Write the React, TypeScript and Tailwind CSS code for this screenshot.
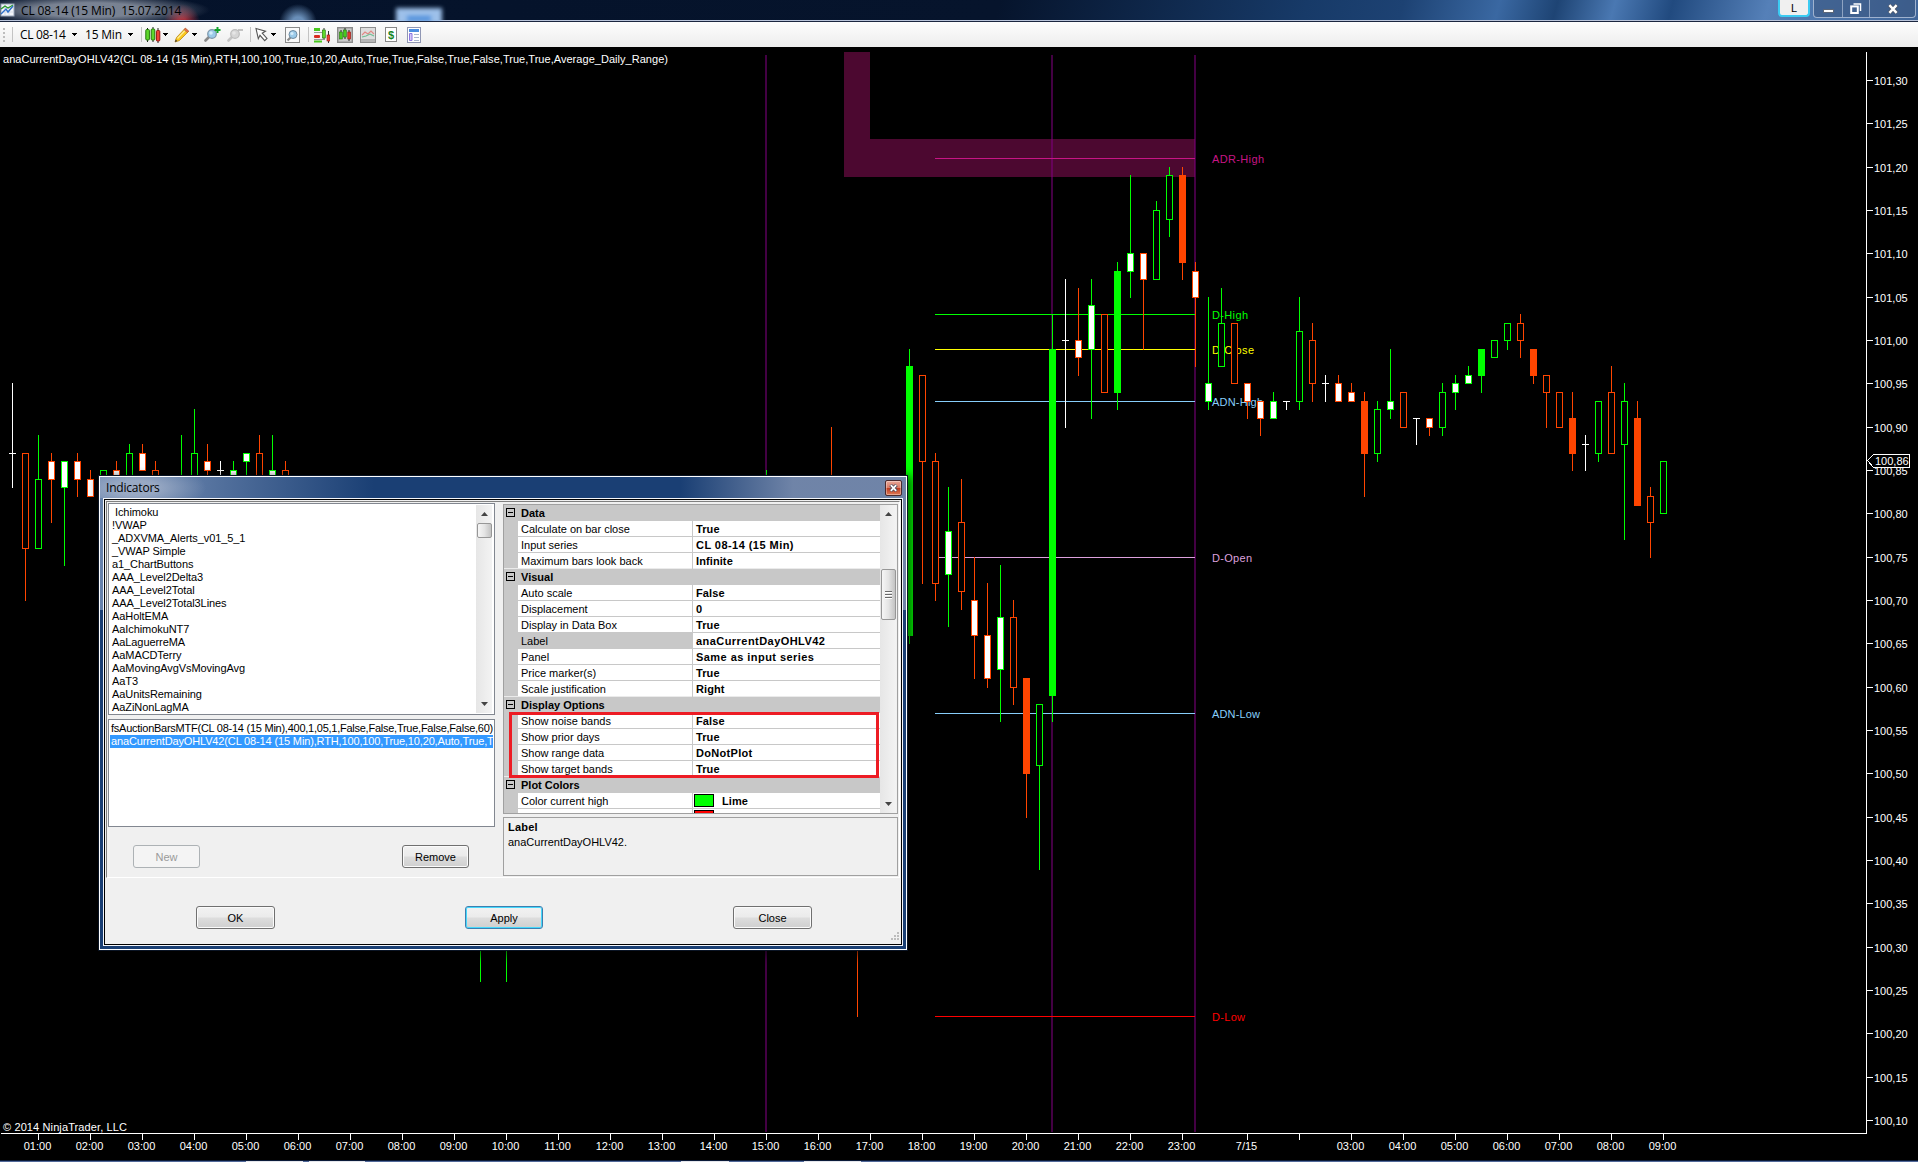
import React from 'react';
import clsx from 'clsx';

type CandleKind = 'up' | 'down' | 'upSmall' | 'downSmall' | 'upBig' | 'downBig' | 'doji';

// bar index, kind, high, body top, body bottom, low (prices in cents)
type Candle = [number, CandleKind, number, number, number, number];

const LIME = '#00ff00';
const ORANGE = '#ff4500';

const candles: Candle[] = [
  [0, 'doji', 10095, 10087, 10087, 10083],
  [1, 'down', 10087, 10087, 10076, 10070],
  [2, 'up', 10089, 10084, 10076, 10076],
  [3, 'downSmall', 10087, 10086, 10084, 10079],
  [4, 'upSmall', 10086, 10086, 10083, 10074],
  [5, 'downSmall', 10087, 10086, 10084, 10082],
  [6, 'downSmall', 10085, 10084, 10082, 10082],
  [7, 'up', 10085, 10085, 10080, 10080],
  [8, 'downSmall', 10086, 10085, 10082, 10082],
  [9, 'up', 10088, 10087, 10082, 10082],
  [10, 'downSmall', 10088, 10087, 10085, 10085],
  [11, 'down', 10086, 10085, 10080, 10080],
  [13, 'up', 10089, 10082, 10080, 10080],
  [14, 'up', 10092, 10087, 10082, 10082],
  [15, 'downSmall', 10088, 10086, 10085, 10083],
  [16, 'doji', 10086, 10085, 10085, 10083],
  [17, 'upSmall', 10086, 10085, 10083, 10083],
  [18, 'upSmall', 10087, 10087, 10086, 10083],
  [19, 'down', 10089, 10087, 10082, 10082],
  [20, 'upSmall', 10089, 10085, 10083, 10083],
  [21, 'down', 10086, 10085, 10081, 10081],
  [36, 'up', 10040, 10040, 10035, 10026],
  [38, 'up', 10040, 10040, 10035, 10026],
  [58, 'up', 10085, 10080, 10075, 10075],
  [63, 'down', 10090, 10080, 10075, 10075],
  [65, 'down', 10040, 10040, 10035, 10022],
  [69, 'upBig', 10099, 10097, 10066, 10065],
  [70, 'down', 10096, 10096, 10086, 10072],
  [71, 'down', 10087, 10086, 10072, 10070],
  [72, 'upSmall', 10083, 10078, 10073, 10067],
  [73, 'down', 10084, 10079, 10071, 10069],
  [74, 'downSmall', 10075, 10070, 10066, 10061],
  [75, 'downSmall', 10072, 10066, 10061, 10060],
  [76, 'upSmall', 10074, 10068, 10062, 10056],
  [77, 'down', 10070, 10068, 10060, 10058],
  [78, 'downBig', 10061, 10061, 10050, 10045],
  [79, 'up', 10058, 10058, 10051, 10039],
  [80, 'upBig', 10103, 10099, 10059, 10056],
  [81, 'doji', 10107, 10100, 10100, 10090],
  [82, 'downSmall', 10106, 10100, 10098, 10096],
  [83, 'upSmall', 10107, 10104, 10099, 10091],
  [84, 'down', 10103, 10103, 10094, 10094],
  [85, 'upBig', 10109, 10108, 10094, 10092],
  [86, 'upSmall', 10119, 10110, 10108, 10105],
  [87, 'downSmall', 10110, 10110, 10107, 10099],
  [88, 'up', 10116, 10115, 10107, 10107],
  [89, 'up', 10120, 10119, 10114, 10112],
  [90, 'downBig', 10120, 10119, 10109, 10107],
  [91, 'downSmall', 10109, 10108, 10105, 10097],
  [92, 'upSmall', 10105, 10095, 10093, 10092],
  [93, 'up', 10106, 10102, 10097, 10097],
  [94, 'down', 10102, 10102, 10095, 10095],
  [95, 'downSmall', 10095, 10095, 10093, 10091],
  [96, 'downSmall', 10093, 10093, 10091, 10089],
  [97, 'upSmall', 10094, 10093, 10091, 10091],
  [98, 'doji', 10093, 10093, 10093, 10092],
  [99, 'up', 10105, 10101, 10093, 10092],
  [100, 'down', 10102, 10100, 10095, 10093],
  [101, 'doji', 10096, 10095, 10095, 10093],
  [102, 'downSmall', 10096, 10095, 10093, 10093],
  [103, 'downSmall', 10095, 10094, 10093, 10093],
  [104, 'downBig', 10094, 10093, 10087, 10082],
  [105, 'up', 10093, 10092, 10087, 10086],
  [106, 'upSmall', 10099, 10093, 10092, 10091],
  [107, 'down', 10094, 10094, 10090, 10090],
  [108, 'doji', 10091, 10091, 10091, 10088],
  [109, 'downSmall', 10091, 10091, 10090, 10089],
  [110, 'up', 10095, 10094, 10090, 10089],
  [111, 'upSmall', 10096, 10095, 10094, 10092],
  [112, 'upSmall', 10097, 10096, 10095, 10095],
  [113, 'upBig', 10099, 10099, 10096, 10094],
  [114, 'up', 10100, 10100, 10098, 10098],
  [115, 'up', 10102, 10102, 10100, 10099],
  [116, 'down', 10103, 10102, 10100, 10098],
  [117, 'downBig', 10099, 10099, 10096, 10095],
  [118, 'down', 10096, 10096, 10094, 10090],
  [119, 'down', 10094, 10094, 10090, 10090],
  [120, 'downBig', 10094, 10091, 10087, 10085],
  [121, 'doji', 10089, 10088, 10088, 10085],
  [122, 'up', 10093, 10093, 10087, 10086],
  [123, 'down', 10097, 10094, 10087, 10087],
  [124, 'up', 10095, 10093, 10088, 10077],
  [125, 'downBig', 10093, 10091, 10081, 10081],
  [126, 'down', 10083, 10082, 10079, 10075],
  [127, 'up', 10086, 10086, 10080, 10080],
];

const levels = [
  { label: 'ADR-High', price: 10121, color: '#c71585', width: 52 },
  { label: 'D-High', price: 10103, color: '#00ff00', width: 36 },
  { label: 'D-Close', price: 10099, color: '#ffff00', width: 42 },
  { label: 'ADN-High', price: 10093, color: '#87cefa', width: 51 },
  { label: 'D-Open', price: 10075, color: '#dda0dd', width: 40 },
  { label: 'ADN-Low', price: 10057, color: '#87cefa', width: 48 },
  { label: 'D-Low', price: 10022, color: '#ff0000', width: 33 },
];

const hours = [
  ...Array.from({ length: 23 }, (_, i) => ({ bar: 2 + i * 4, label: `${String(i + 1).padStart(2, '0')}:00` })),
  { bar: 95, label: '7/15' },
  { bar: 99, label: '' },
  ...Array.from({ length: 7 }, (_, i) => ({ bar: 103 + i * 4, label: `0${i + 3}:00` })),
];

const prices = Array.from({ length: 25 }, (_, i) => 10130 - i * 5);

const formatPrice = (price: number) => `${Math.floor(price / 100)},${String(price % 100).padStart(2, '0')}`;

// the chart svg starts at y = 47 of the window, hence 33 for 101,30
const yOf = (price: number) => Math.round(33 + (10130 - price) * (26 / 3));
const xOf = (bar: number) => 12 + bar * 13;

const CandleShape: React.FC<{ candle: Candle }> = ({ candle }) => {
  const [bar, kind, high, top, bottom, low] = candle;
  const x = xOf(bar);
  if (kind === 'doji') {
    return (
      <g fill="#fff">
        <rect x={x} y={yOf(high)} width={1} height={yOf(low) - yOf(high) + 1} />
        <rect x={x - 3} y={yOf(top)} width={7} height={1} />
      </g>
    );
  }
  const color = kind.startsWith('up') ? LIME : ORANGE;
  const fill = kind.endsWith('Big') ? color : kind.endsWith('Small') ? '#fff' : '#000';
  return (
    <g>
      <rect x={x} y={yOf(high)} width={1} height={yOf(low) - yOf(high) + 1} fill={color} />
      <rect x={x - 2.5} y={yOf(top) + 0.5} width={6} height={yOf(bottom) - yOf(top)} fill={fill} stroke={color} />
    </g>
  );
};

const Chart: React.FC = () => (
  <svg
    width="1918"
    height="1115"
    viewBox="0 0 1918 1115"
    className="block bg-black font-['Liberation_Sans',sans-serif] text-[11px]"
    shapeRendering="crispEdges"
  >
    <path d="M844 5h26v87h325v38H844z" fill="#4c0830" />
    <g fill="#800080" fillOpacity="0.52">
      <rect x="765" y="8" width="2" height="1077" />
      <rect x="1051" y="8" width="2" height="1077" />
      <rect x="1194" y="8" width="2" height="1077" />
    </g>
    {levels.map((level) => (
      <g key={level.label} fill={level.color}>
        <rect x="935" y={yOf(level.price)} width="260" height="1" />
        <text x="1212" y={yOf(level.price) + 5} textLength={level.width}>
          {level.label}
        </text>
      </g>
    ))}
    {candles.map((candle) => (
      <CandleShape key={candle[0]} candle={candle} />
    ))}
    <g fill="#fff">
      <text x="3" y="16" textLength="665">
        anaCurrentDayOHLV42(CL 08-14 (15 Min),RTH,100,100,True,10,20,Auto,True,True,False,True,False,True,True,Average_Daily_Range)
      </text>
      <text x="3" y="1084" textLength="124">
        © 2014 NinjaTrader, LLC
      </text>
      <rect x="1866" y="5" width="1" height="1082" />
      <rect x="1" y="1086" width="1866" height="1" />
      {prices.map((price) => (
        <g key={price}>
          <rect x="1867" y={yOf(price)} width="6" height="1" />
          <text x="1874" y={yOf(price) + 5}>
            {formatPrice(price)}
          </text>
        </g>
      ))}
      {hours.map((hour) => (
        <g key={hour.bar}>
          <rect x={xOf(hour.bar)} y="1087" width="1" height="6" />
          <text x={xOf(hour.bar) - 0.5} y="1103" textAnchor="middle">
            {hour.label}
          </text>
        </g>
      ))}
    </g>
    <path d="M1867.5 413.5l6-6h36v13h-36z" fill="#000" stroke="#fff" />
    <text x="1875" y="418" fill="#fff">
      100,86
    </text>
    {/* top edge of the task bar */}
    <rect x="0" y="1113" width="1918" height="1" fill="#0b1a38" />
    <rect x="0" y="1114" width="1918" height="1" fill="#51699a" />
    <path d="M246 1114h57v1h-57zM309 1114h56v1h-56zM681 1114h48v1h-48zM804 1114h57v1h-57z" fill="#e4e6ec" />
  </svg>
);

const Caret: React.FC<{ className?: string }> = ({ className }) => (
  <svg width="5" height="3" viewBox="0 0 5 3" className={clsx('shrink-0', className)} shapeRendering="crispEdges">
    <path d="M0 0h5v1H0zM1 1h3v1H1zM2 2h1v1H2z" fill="#000" />
  </svg>
);

const Separator: React.FC<{ className?: string }> = ({ className }) => (
  <div className={clsx('h-[15px] w-px shrink-0 bg-[#c3c3c3]', className)} />
);

const Magnifier: React.FC<{ disabled?: boolean }> = ({ disabled }) => (
  <>
    <path d="M5.5 9.5L1.5 13.5" stroke={disabled ? '#c4c4c4' : '#8a8a8a'} strokeWidth="2.6" strokeLinecap="round" />
    <circle cx="8" cy="7" r="4.3" fill={disabled ? '#d6d6d6' : '#9ccbea'} stroke={disabled ? '#bdbdbd' : '#7f97ab'} strokeWidth="1.2" />
    <circle cx="7" cy="6" r="1.8" fill={disabled ? '#e6e6e6' : '#d4ecfa'} />
  </>
);

const Toolbar: React.FC = () => (
  <div className="flex h-[25px] items-center bg-gradient-to-b from-[#fdfdfd] to-[#ededed] font-['Open_Sans',sans-serif] text-xs text-black">
    <div className="ml-[3px] flex w-[2px] flex-col gap-[2px]">
      <i className="h-[2px] bg-[#bdbdbd]" />
      <i className="h-[2px] bg-[#bdbdbd]" />
      <i className="h-[2px] bg-[#bdbdbd]" />
      <i className="h-[2px] bg-[#bdbdbd]" />
    </div>
    <Separator className="ml-[7px]" />
    <span className="ml-[7px] w-[47px] whitespace-nowrap tracking-[-0.35px]">CL 08-14</span>
    <Caret className="ml-[5px]" />
    <span className="ml-2 w-[38px] whitespace-nowrap tracking-[-0.2px]">15 Min</span>
    <Caret className="ml-[5px]" />
    <Separator className="ml-2" />
    <svg width="16" height="16" viewBox="0 0 16 16" className="ml-[3px]">
      <path d="M2.5 1v14M8 0v15M13 1v15" stroke="#222" />
      <rect x="0.8" y="2.5" width="3.6" height="10.5" rx="1" fill="#5fd92c" stroke="#23780b" />
      <rect x="6.2" y="2" width="3.6" height="11" rx="1" fill="#5fd92c" stroke="#23780b" />
      <rect x="11.4" y="3.5" width="3.4" height="10.5" rx="1" fill="#f04438" stroke="#96150e" />
    </svg>
    <Caret className="ml-[2px]" />
    <svg width="16" height="16" viewBox="0 0 16 16" className="ml-[6px]">
      <path d="M1 15l1.5-4.5L11 1.5l3.5 3L5.5 13.5z" fill="#fbc81c" stroke="#b9861a" strokeWidth="0.8" />
      <path d="M3.5 11.5l8.5-9" stroke="#fdee9c" strokeWidth="1.2" />
      <path d="M10 2.6l1.4-1.5 3.4 3-1.4 1.5z" fill="#e8704a" stroke="#a65538" strokeWidth="0.6" />
      <path d="M1 15l.8-2.4 1.4 1.5z" fill="#333" />
    </svg>
    <Caret className="ml-[2px]" />
    <svg width="18" height="16" viewBox="0 0 18 16" className="ml-[7px]">
      <Magnifier />
      <path d="M13.5 0v6M10.5 3h6" stroke="#13a32c" strokeWidth="2" />
    </svg>
    <svg width="18" height="16" viewBox="0 0 18 16" className="ml-[5px]">
      <Magnifier disabled />
      <path d="M11 3h5" stroke="#b5b5b5" strokeWidth="1.6" />
    </svg>
    <Separator className="ml-[5px]" />
    <svg width="14" height="15" viewBox="0 0 14 15" className="ml-[4px]">
      <path d="M1 1.5l9.5 2.7-3.3 2 4.8 5.3-2.3 2.2-4.7-5.4-1.7 3.4z" fill="#fff" stroke="#555" strokeWidth="1.1" />
    </svg>
    <Caret className="ml-[2px]" />
    <svg width="16" height="16" viewBox="0 0 16 16" className="ml-[9px]">
      <rect x="0.5" y="0.5" width="14" height="15" fill="#fafafa" stroke="#8a8a8a" />
      <path d="M6 10l-3.5 3.5" stroke="#8a8a8a" strokeWidth="2.2" />
      <circle cx="8" cy="7.5" r="4" fill="#9ccbea" stroke="#6f8ba1" />
      <circle cx="7" cy="6.5" r="1.6" fill="#d4ecfa" />
    </svg>
    <Separator className="ml-[7px]" />
    <svg width="16" height="16" viewBox="0 0 16 16" className="ml-[5px]">
      <path d="M0 2.5h6M0 5.5h8M0 12.5h9" stroke="#999" />
      <rect x="0" y="1" width="6" height="3" fill="#48c81f" />
      <rect x="0" y="8" width="6" height="3" rx="1" fill="#d92b20" />
      <path d="M0 14.5h8" stroke="#48c81f" strokeWidth="2" />
      <path d="M10 1v12M14.5 4v12" stroke="#333" />
      <rect x="8.3" y="3" width="3" height="8" fill="#5fd92c" stroke="#23780b" strokeWidth="0.6" />
      <rect x="13" y="8" width="2.8" height="6" fill="#f04438" stroke="#96150e" strokeWidth="0.6" />
    </svg>
    <svg width="16" height="16" viewBox="0 0 16 16" className="ml-[7px]">
      <rect x="0.7" y="0.7" width="14.6" height="14.6" fill="#c9c9c9" stroke="#8b8b8b" strokeWidth="1.4" />
      <path d="M4 3v9M8 1v11M12 3v11" stroke="#222" />
      <rect x="2.5" y="5" width="2.8" height="7" fill="#48c81f" stroke="#23780b" strokeWidth="0.6" />
      <rect x="6.5" y="3" width="2.8" height="7" fill="#48c81f" stroke="#23780b" strokeWidth="0.6" />
      <rect x="10.8" y="5" width="2.8" height="7" fill="#e03a2e" stroke="#96150e" strokeWidth="0.6" />
    </svg>
    <svg width="16" height="16" viewBox="0 0 16 16" className="ml-[7px]">
      <rect x="0.5" y="0.5" width="15" height="15" fill="#dedede" stroke="#8f8f8f" />
      <path d="M1 12h14v3H1z" fill="#b5b5b5" />
      <path d="M2 8l3-3 3 2 3-3 3 3" fill="none" stroke="#e08a86" strokeWidth="1.1" />
      <path d="M2 10l4-1 4-2 4 2" fill="none" stroke="#6dbd92" strokeWidth="1.1" />
    </svg>
    <svg width="13" height="15" viewBox="0 0 13 15" className="ml-[9px]">
      <rect x="0.5" y="0.5" width="11" height="14" fill="#fff" stroke="#888" />
      <text x="6" y="11.5" textAnchor="middle" fill="#15841f" className="font-['Liberation_Sans',sans-serif] text-[11px] font-bold">
        $
      </text>
    </svg>
    <svg width="14" height="16" viewBox="0 0 14 16" className="ml-[9px]">
      <rect x="0.5" y="0.5" width="13" height="15" fill="#fff" stroke="#9097b4" />
      <path d="M2 2h10v3H2z" fill="#4c8fe0" />
      <path d="M2.5 6.5h2.5v7H2.5z" fill="#d3c7f8" stroke="#8c76e0" />
      <path d="M7 7.5h5M7 10.5h5M7 13.5h5" stroke="#a9b6cc" />
    </svg>
  </div>
);

const TitleBar: React.FC = () => (
  <div className="relative flex h-[22px] items-start overflow-hidden border-b border-[#1c2740] bg-[radial-gradient(ellipse_120px_16px_at_90px_10px,rgba(150,158,172,0.8)_45%,transparent_100%),radial-gradient(circle_at_182px_22px,rgba(190,50,60,0.85)_4px,transparent_18px),radial-gradient(circle_at_298px_23px,rgba(116,156,200,0.9)_6px,transparent_19px),linear-gradient(105deg,#04122a_0%,#06142c_52%,#173a68_68%,#1d4273_73%,#3a68a2_78%,#1e4474_81%,#4a78b2_84%,#214a7f_87%,#5580b8_92%,#3f6599_100%)] shadow-[inset_0_-1px_0_#b9c4da]">
    <svg width="16" height="16" viewBox="0 0 16 16" className="ml-[-1px] mt-[2px] shrink-0">
      <rect x="2" y="2" width="13" height="12" fill="#f2f5fa" stroke="#98a4b8" />
      <path d="M2 6h13M2 10h13M6 2v12M10 2v12" stroke="#ccd4e0" strokeWidth="0.7" />
      <path d="M2 7l4-3 3 2 5-3" fill="none" stroke="#2c9a2f" strokeWidth="1.4" />
      <path d="M2 12l5-5 2 3 5-6" fill="none" stroke="#2d6fc9" strokeWidth="1.4" />
    </svg>
    <span className="ml-[6px] mt-[3px] w-[375px] shrink-0 whitespace-pre font-['Open_Sans',sans-serif] text-xs leading-4 tracking-[-0.13px] text-black">
      {'CL 08-14 (15 Min)  15.07.2014'}
    </span>
    {/* desktop icon shining through the glass */}
    <div className="mt-[8px] h-[16px] w-[46px] shrink-0 bg-[#9dc0ea] blur-[2px]">
      <div className="mx-auto mt-[8px] h-[5px] w-[24px] bg-[#4f8fdc]" />
    </div>
    <div className="ml-auto flex">
      <div className="h-[17px] w-8 rounded-b-sm border-2 border-t-0 border-[#3ccbf2] bg-[#f0f0f0] text-center font-['Liberation_Sans',sans-serif] text-[11px] leading-[16px] text-black">
        L
      </div>
      <div className="ml-[3px] mr-[2px] flex h-[18px] w-[103px] overflow-hidden rounded-b border border-t-0 border-[#9fb2cf] bg-[#3b5780]/60">
        <div className="flex w-[29px] items-center justify-center border-r border-[#8ea3c2]">
          <div className="mt-1 h-[4px] w-[11px] border border-[#5b6678] bg-white" />
        </div>
        <div className="flex w-[27px] items-center justify-center border-r border-[#8ea3c2]">
          <svg width="12" height="12" viewBox="0 0 12 12">
            <path d="M3.5 1h7v7" fill="none" stroke="#fff" strokeWidth="1.5" />
            <rect x="1.2" y="3.4" width="6.6" height="6.6" fill="none" stroke="#fff" strokeWidth="2" />
          </svg>
        </div>
        <div className="flex flex-1 items-center justify-center">
          <svg width="12" height="10" viewBox="0 0 12 10">
            <path d="M2 1l8 8M10 1L2 9" stroke="#4d5668" strokeWidth="4" />
            <path d="M2.4 1.2l7.2 7.6M9.6 1.2L2.4 8.8" stroke="#fff" strokeWidth="2.4" />
          </svg>
        </div>
      </div>
    </div>
  </div>
);

const indicators = [
  ' Ichimoku',
  '!VWAP',
  '_ADXVMA_Alerts_v01_5_1',
  '_VWAP Simple',
  'a1_ChartButtons',
  'AAA_Level2Delta3',
  'AAA_Level2Total',
  'AAA_Level2Total3Lines',
  'AaHoltEMA',
  'AaIchimokuNT7',
  'AaLaguerreMA',
  'AaMACDTerry',
  'AaMovingAvgVsMovingAvg',
  'AaT3',
  'AaUnitsRemaining',
  'AaZiNonLagMA',
];

interface GridRow {
  name: string;
  value?: string;
  color?: string;
  selected?: boolean;
}

const gridRows: GridRow[] = [
  { name: 'Data' },
  { name: 'Calculate on bar close', value: 'True' },
  { name: 'Input series', value: 'CL 08-14 (15 Min)' },
  { name: 'Maximum bars look back', value: 'Infinite' },
  { name: 'Visual' },
  { name: 'Auto scale', value: 'False' },
  { name: 'Displacement', value: '0' },
  { name: 'Display in Data Box', value: 'True' },
  { name: 'Label', value: 'anaCurrentDayOHLV42', selected: true },
  { name: 'Panel', value: 'Same as input series' },
  { name: 'Price marker(s)', value: 'True' },
  { name: 'Scale justification', value: 'Right' },
  { name: 'Display Options' },
  { name: 'Show noise bands', value: 'False' },
  { name: 'Show prior days', value: 'True' },
  { name: 'Show range data', value: 'DoNotPlot' },
  { name: 'Show target bands', value: 'True' },
  { name: 'Plot Colors' },
  { name: 'Color current high', value: 'Lime', color: 'bg-[#00ff00]' },
  { name: 'Color current low', value: 'Red', color: 'bg-[#ff0000]' },
];

const ScrollBar: React.FC<{ spacer: string; thumb: string; grip?: boolean }> = ({ spacer, thumb, grip }) => (
  <div className="flex w-4 shrink-0 flex-col items-center bg-gradient-to-r from-[#e6e6e6] to-[#f3f3f3]">
    <svg width="7" height="4" viewBox="0 0 7 4" className="mt-[7px] shrink-0">
      <path d="M3.5 0L7 4H0z" fill="#444" />
    </svg>
    <div className={spacer} />
    <div
      className={clsx(
        'flex w-[15px] shrink-0 flex-col items-center justify-center gap-[1px] rounded-[2px] border border-[#979797] bg-gradient-to-r from-[#f6f6f6] via-[#e4e4e4] to-[#c3c3c3]',
        thumb
      )}
    >
      {grip && (
        <>
          <i className="h-[2px] w-[7px] border-b border-white bg-[#6a6a6a]" />
          <i className="h-[2px] w-[7px] border-b border-white bg-[#6a6a6a]" />
          <i className="h-[2px] w-[7px] border-b border-white bg-[#6a6a6a]" />
        </>
      )}
    </div>
    <svg width="7" height="4" viewBox="0 0 7 4" className="mb-[7px] mt-auto shrink-0">
      <path d="M0 0h7L3.5 4z" fill="#444" />
    </svg>
  </div>
);

const Button: React.FC<{ className?: string; disabled?: boolean; focused?: boolean; children: React.ReactNode }> = ({
  className,
  disabled,
  focused,
  children,
}) => (
  <button
    className={clsx(
      'block h-[23px] shrink-0 rounded-[3px] border text-center leading-[20px]',
      disabled && 'border-[#adb2b5] bg-[#f4f4f4] text-[#9a9a9a]',
      !disabled && 'bg-[linear-gradient(#f2f2f2_0%,#ebebeb_48%,#dddddd_52%,#cfcfcf_100%)] text-black',
      !disabled && !focused && 'border-[#707070] shadow-[inset_0_0_0_1px_#fbfbfb]',
      focused && 'border-[#3c7fb1] shadow-[inset_0_0_0_1px_#46d8fb]',
      className
    )}
  >
    {children}
  </button>
);

const PropertyGrid: React.FC = () => (
  <div className="relative flex h-[310px] overflow-hidden border border-[#a0a0a0] bg-[#f0f0f0]">
    <div className="w-[376px]">
      {gridRows.map((row, i) => {
        if (!row.value) {
          return (
            <div key={row.name} className="flex h-4 items-start bg-[#c8c8c8] font-bold">
              <svg width="9" height="9" viewBox="0 0 9 9" className="ml-[2px] mt-[3px]" shapeRendering="crispEdges">
                <path d="M0.5 0.5h8v8h-8zM2 4.5h5" fill="none" stroke="#000" />
              </svg>
              <span className="ml-[6px] leading-4">{row.name}</span>
            </div>
          );
        }
        const last = i + 1 < gridRows.length && !gridRows[i + 1].value;
        return (
          <div key={row.name} className="flex h-4 bg-[#c8c8c8]">
            <div className={clsx('w-[14px] shrink-0', last && 'border-b border-[#ebebeb]')} />
            <div
              className={clsx(
                'w-[174px] shrink-0 whitespace-nowrap border-b pl-[3px] leading-4',
                last ? 'border-[#ebebeb]' : 'border-[#c8c8c8]',
                row.selected ? 'bg-[#c8c8c8]' : 'bg-white'
              )}
            >
              {row.name}
            </div>
            <div
              className={clsx(
                'ml-px flex flex-1 items-start whitespace-nowrap border-b bg-white pl-[3px] font-bold leading-4',
                row.value.length > 12 ? 'tracking-[0.45px]' : row.value.length > 8 ? 'tracking-[0.3px]' : 'tracking-[0.1px]',
                last ? 'border-[#ebebeb]' : 'border-[#c8c8c8]'
              )}
            >
              {row.color && <div className={clsx('ml-[-2px] mr-[8px] mt-px h-[13px] w-5 border border-black', row.color)} />}
              {row.value}
            </div>
          </div>
        );
      })}
    </div>
    <ScrollBar spacer="h-[53px] shrink-0" thumb="h-[51px]" grip />
    <div className="absolute left-[5px] top-[207px] h-[66px] w-[370px] border-[3px] border-[#ed1c24]" />
  </div>
);

const IndicatorsDialog: React.FC = () => (
  <div className="absolute left-[99px] top-[476px] h-[474px] w-[808px] border border-white bg-[linear-gradient(90deg,rgba(112,138,178,0.9)_0%,rgba(112,138,178,0.75)_12%,transparent_34%,transparent_72%,rgba(140,155,185,0.75)_86%,rgba(140,155,185,0.75)_100%),linear-gradient(#1a3f74,#1a3f74)] bg-[length:100%_133px,100%_100%] bg-no-repeat font-['Liberation_Sans',sans-serif] text-[11px] text-black shadow-[0_0_0_1px_#0a1424,2px_3px_9px_3px_rgba(0,0,0,0.6)]">
    <div className="flex h-[21px] items-start justify-between bg-[radial-gradient(ellipse_70px_24px_at_36px_11px,rgba(170,183,205,0.75)_30%,transparent_100%)]">
      <span className="ml-[6px] mt-[3px] font-['Open_Sans',sans-serif] text-xs leading-4 tracking-[-0.2px]">Indicators</span>
      <div className="mr-[4px] mt-[3px] flex h-4 w-[17px] items-center justify-center rounded-[2px] border border-[#4a2a2e] bg-[linear-gradient(#e9a797_0%,#d97a66_48%,#bf3a1f_52%,#dd7a58_100%)] shadow-[inset_0_0_0_1px_rgba(255,255,255,0.35)]">
        <svg width="9" height="8" viewBox="0 0 9 8">
          <path d="M1.5 1l6 6M7.5 1l-6 6" stroke="#4a4a5a" strokeWidth="3.4" />
          <path d="M1.8 1.2l5.4 5.6M7.2 1.2L1.8 6.8" stroke="#fff" strokeWidth="1.8" />
        </svg>
      </div>
    </div>
    <div className="mx-[3px] h-[448px] border border-[#f4f6fa]">
      <div className="flex h-[446px] flex-col border border-black bg-[#f0f0f0] p-px">
        <div className="flex h-[377px] border border-b-white border-l-[#808080] border-r-white border-t-[#808080]">
          <div className="w-[388px] pl-px pt-px">
            <div className="flex h-[212px] border border-[#828790] bg-white">
              <div className="flex-1 overflow-hidden pl-[3px] pt-[2px]">
                {indicators.map((name) => (
                  <div key={name} className="h-[13px] whitespace-pre leading-[13px] tracking-[-0.08px]">
                    {name}
                  </div>
                ))}
              </div>
              <div className="flex py-px pr-[2px]">
                <ScrollBar spacer="h-[7px] shrink-0" thumb="h-[15px]" />
              </div>
            </div>
            <div className="mt-1 h-[108px] border border-[#828790] bg-white px-px pt-[2px]">
              <div className="h-[13px] overflow-hidden whitespace-nowrap pl-px leading-[13px] tracking-[-0.25px]">
                fsAuctionBarsMTF(CL 08-14 (15 Min),400,1,05,1,False,False,True,False,False,60)
              </div>
              <div className="h-[13px] overflow-hidden whitespace-nowrap bg-[#3399ff] pl-px leading-[13px] tracking-[-0.14px] text-white">
                anaCurrentDayOHLV42(CL 08-14 (15 Min),RTH,100,100,True,10,20,Auto,True,T
              </div>
            </div>
            <div className="flex justify-between pl-[25px] pr-[26px] pt-[18px]">
              <Button disabled className="w-[67px]">
                New
              </Button>
              <Button className="w-[67px]">Remove</Button>
            </div>
          </div>
          <div className="ml-2 w-[395px] pt-[2px]">
            <PropertyGrid />
            <div className="mt-[3px] h-[59px] border border-[#a0a0a0] px-[4px] pt-[2px]">
              <div className="font-bold leading-[15px] tracking-[0.2px]">Label</div>
              <div className="leading-[15px]">anaCurrentDayOHLV42.</div>
            </div>
          </div>
        </div>
        <div className="mt-[28px] flex justify-between pl-[90px] pr-[88px]">
          <Button className="w-[79px]">OK</Button>
          <Button focused className="w-[78px]">
            Apply
          </Button>
          <Button className="w-[79px]">Close</Button>
        </div>
        <svg width="9" height="9" viewBox="0 0 9 9" className="ml-auto mt-[3px]" shapeRendering="crispEdges">
          <path d="M6 0h2v2H6zM3 3h2v2H3zM6 3h2v2H6zM0 6h2v2H0zM3 6h2v2H3zM6 6h2v2H6z" fill="#bcbcbc" />
        </svg>
      </div>
    </div>
  </div>
);

const App: React.FC = () => {
  return (
    <div className="relative h-[1162px] w-[1918px] overflow-hidden bg-black">
      <TitleBar />
      <Toolbar />
      <Chart />
      <IndicatorsDialog />
    </div>
  );
};

export default App;
